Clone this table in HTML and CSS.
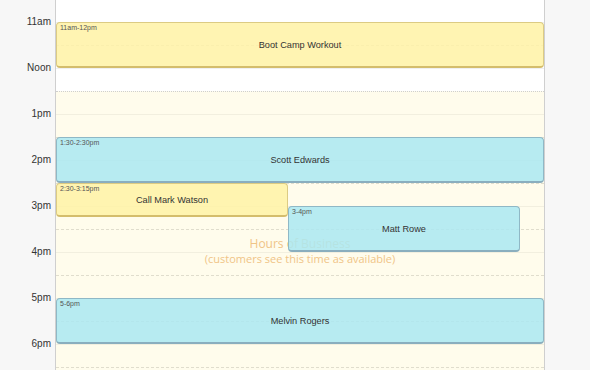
FILE: index.html
```html
<!DOCTYPE html>
<html>
<head>
<meta charset="utf-8">
<link rel="stylesheet" href="styles.css">
</head>
<body>
<div class="cal">
  <div class="gutter">
    <div class="labels">
      <div class="hour">11am</div>
      <div class="hour">Noon</div>
      <div class="hour">1pm</div>
      <div class="hour">2pm</div>
      <div class="hour">3pm</div>
      <div class="hour">4pm</div>
      <div class="hour">5pm</div>
      <div class="hour">6pm</div>
    </div>
  </div>
  <div class="day">
    <div class="slots">
      <div class="slot top off"></div>
      <div class="slot solid off"></div>
      <div class="slot dash off"></div>
      <div class="slot solid off"></div>
      <div class="slot dash first"></div>
      <div class="slot solid"></div>
      <div class="slot dash"></div>
      <div class="slot solid"></div>
      <div class="slot dash"></div>
      <div class="slot solid"></div>
      <div class="slot dash"></div>
      <div class="slot solid"></div>
      <div class="slot dash"></div>
      <div class="slot solid"></div>
      <div class="slot dash"></div>
      <div class="slot solid"></div>
      <div class="slot dash"></div>
    </div>
    <div class="bizhours">
      <div class="biz-title">Hours of Business</div>
      <div class="biz-sub">(customers see this time as available)</div>
    </div>
    <div class="event yellow ev-boot"><span class="time">11am-12pm</span><span class="title">Boot Camp Workout</span></div>
    <div class="event blue ev-scott"><span class="time">1:30-2:30pm</span><span class="title">Scott Edwards</span></div>
    <div class="event yellow ev-mark"><span class="time">2:30-3:15pm</span><span class="title">Call Mark Watson</span></div>
    <div class="event blue ev-matt"><span class="time">3-4pm</span><span class="title">Matt Rowe</span></div>
    <div class="event blue ev-melvin"><span class="time">5-6pm</span><span class="title">Melvin Rogers</span></div>
  </div>
  <div class="rest"></div>
</div>
</body>
</html>
```
FILE: styles.css
```css
html, body {
  margin: 0;
  padding: 0;
  height: 100%;
  overflow: hidden;
  background: #f7f7f7;
}
.cal {
  display: flex;
  height: 370px;
  font-family: "Liberation Sans", Arial, sans-serif;
}
.gutter {
  width: 55px;
  flex: none;
  background: #f7f7f7;
  border-right: 1px solid #cfcfcf;
  overflow: hidden;
}
.labels {
  margin-top: -2px;
}
.hour {
  height: 46px;
  display: flex;
  align-items: center;
  justify-content: flex-end;
  padding-right: 4px;
  font-size: 10px;
  color: #333;
}
.day {
  width: 488px;
  flex: none;
  position: relative;
  overflow: hidden;
  background: #fffcec;
}
.slots {
  display: flex;
  flex-direction: column;
}
.slot {
  height: 23px;
  box-sizing: border-box;
  flex: none;
}
.slot.top { height: 22px; }
.slot.off { background: #ffffff; }
.slot.solid { border-top: 1px solid #f2efdf; }
.slot.dash { border-top: 1px dashed #e0ddcd; }
.slot.solid.off { border-top: 1px solid #f0f0f0; }
.slot.dash.off { border-top: 1px dashed #dddddd; }
.slot.dash.first { border-top: 1px dotted #cfcfcf; }
.bizhours {
  position: absolute;
  left: 0;
  right: 0;
  top: 236px;
  text-align: center;
  font-family: "Open Sans", sans-serif;
  color: #f0c487;
}
.biz-title { font-size: 12px; line-height: 16px; }
.biz-sub { font-size: 11px; line-height: 14px; }
.event {
  position: absolute;
  box-sizing: border-box;
  border-radius: 4px;
  border: 1px solid;
  border-bottom-width: 2px;
  display: flex;
  align-items: center;
  justify-content: center;
}
.event.yellow {
  background: rgba(255, 242, 165, 0.86);
  border-color: #dccb83;
  border-bottom-color: #d4bd6c;
}
.event.blue {
  background: rgba(171, 232, 241, 0.86);
  border-color: #8fb8c6;
  border-bottom-color: #8aaebe;
}
.time {
  position: absolute;
  left: 3px;
  top: 1px;
  font-size: 7px;
  color: #555;
}
.title {
  font-size: 9.2px;
  color: #333;
}
.ev-boot { left: 0; width: 488px; top: 22px; height: 46px; }
.ev-scott { left: 0; width: 488px; top: 137px; height: 46px; }
.ev-mark { left: 0; width: 232px; top: 183px; height: 34px; }
.ev-matt { left: 232px; width: 232px; top: 206px; height: 46px; }
.ev-melvin { left: 0; width: 488px; top: 298px; height: 46px; }
.rest {
  flex: 1;
  background: #f7f7f7;
  border-left: 1px solid #cfcfcf;
}
```
